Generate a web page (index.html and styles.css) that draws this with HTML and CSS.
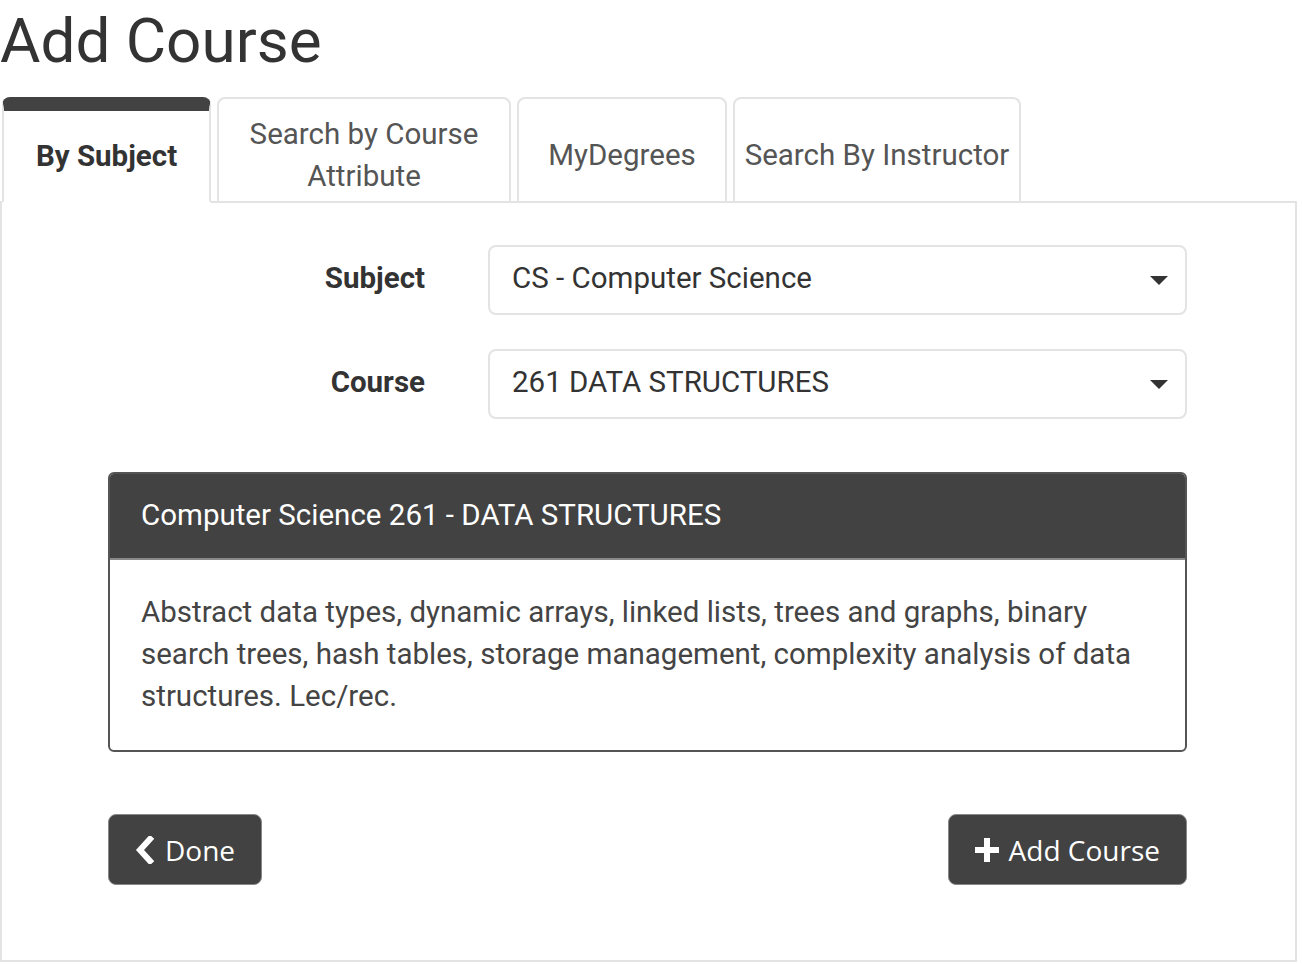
FILE: index.html
```html
<!DOCTYPE html>
<html lang="en">
<head>
<meta charset="utf-8">
<title>Add Course</title>
<link rel="stylesheet" href="styles.css">
</head>
<body>
<div class="page">
  <h1 class="title">Add Course</h1>
  <div class="tabs">
    <div class="tab tab-active">By Subject</div>
    <div class="tab tab-wrap">Search by Course Attribute</div>
    <div class="tab tab-mid">MyDegrees</div>
    <div class="tab tab-tight">Search By Instructor</div>
  </div>
  <div class="panel">
    <div class="form-row">
      <label class="form-label">Subject</label>
      <div class="select">
        <span class="select-text">CS - Computer Science</span>
        <span class="caret"></span>
      </div>
    </div>
    <div class="form-row">
      <label class="form-label">Course</label>
      <div class="select">
        <span class="select-text">261 DATA STRUCTURES</span>
        <span class="caret"></span>
      </div>
    </div>
    <div class="card">
      <div class="card-header">Computer Science 261 - DATA STRUCTURES</div>
      <div class="card-body">Abstract data types, dynamic arrays, linked lists, trees and graphs, binary search trees, hash tables, storage management, complexity analysis of data structures. Lec/rec.</div>
    </div>
    <div class="actions">
      <button class="btn">
        <svg class="icon-chevron" viewBox="0 0 20 28" width="20" height="28" aria-hidden="true"><polyline points="15,3 5,14 15,25" fill="none" stroke="#fff" stroke-width="6" stroke-linecap="square" stroke-linejoin="miter"/></svg>
        <span>Done</span>
      </button>
      <button class="btn">
        <svg class="icon-plus" viewBox="0 0 24 24" width="24" height="24" aria-hidden="true"><path d="M9 0h6v9h9v6h-9v9H9v-9H0V9h9z" fill="#fff"/></svg>
        <span>Add Course</span>
      </button>
    </div>
  </div>
</div>
</body>
</html>
```
FILE: styles.css
```css
* { box-sizing: border-box; }
html, body { margin: 0; padding: 0; background: #fff; }
body {
  font-family: Roboto, "Liberation Sans", Arial, sans-serif;
  color: #333;
}
.page { width: 1297px; }
.title {
  margin: 0 0 19px 0;
  padding-top: 4px;
  font-size: 62px;
  line-height: 74px;
  font-weight: 400;
  color: #333;
}
.tabs {
  display: flex;
  align-items: flex-end;
  gap: 6px;
  padding-left: 2px;
  margin-bottom: -2px;
  position: relative;
  z-index: 1;
}
.tab {
  height: 106px;
  padding: 12px 26px 2px;
  display: flex;
  align-items: center;
  justify-content: center;
  text-align: center;
  font-size: 29.5px;
  line-height: 42px;
  color: #555;
  background: #fff;
  border: 2px solid #e3e3e3;
  border-radius: 8px 8px 0 0;
}
.tab-active {
  width: 209px;
  padding-left: 10px;
  padding-right: 10px;
  border-top: 14px solid #424242;
  border-bottom-color: #fff;
  padding-top: 2px;
  font-weight: 700;
  color: #333;
}
.tab-wrap { width: 294px; padding-left: 20px; padding-right: 20px; }
.tab-mid { width: 210px; padding-left: 10px; padding-right: 10px; }
.tab-tight { width: 288px; padding-left: 0; padding-right: 0; white-space: nowrap; }
.panel {
  border: 2px solid #e3e3e3;
  padding: 42px 108px 75px 106px;
}
.form-row {
  display: grid;
  grid-template-columns: 317px 1fr;
  column-gap: 63px;
  align-items: center;
  margin-bottom: 34px;
}
.form-label {
  text-align: right;
  font-size: 29.5px;
  font-weight: 700;
  color: #333;
  padding-bottom: 4px;
}
.select {
  height: 70px;
  border: 2px solid #e3e3e3;
  border-radius: 8px;
  display: flex;
  align-items: center;
  justify-content: space-between;
  padding: 0 17px 4px 22px;
  font-size: 29.5px;
  color: #333;
}
.caret {
  width: 0;
  height: 0;
  margin-top: 4px;
  border-left: 9px solid transparent;
  border-right: 9px solid transparent;
  border-top: 9px solid #333;
}
.card {
  margin-top: 53px;
  border: 2px solid #555;
  border-radius: 6px;
  overflow: hidden;
}
.card-header {
  background: #424242;
  color: #fff;
  height: 86px;
  display: flex;
  align-items: center;
  padding: 0 31px 2px;
  font-size: 29.5px;
  border-bottom: 2px solid #8a8a8a;
}
.card-body {
  padding: 31px 31px 33px;
  font-size: 29.5px;
  line-height: 42px;
  color: #444;
}
.actions {
  margin-top: 62px;
  display: flex;
  justify-content: space-between;
}
.btn {
  height: 71px;
  display: flex;
  align-items: center;
  gap: 10px;
  padding: 0 26px;
  background: #424242;
  border: 1px solid #888;
  border-radius: 8px;
  color: #fff;
  font-family: "Open Sans", "Liberation Sans", sans-serif;
  font-size: 28px;
}
.btn svg { display: block; }
```
